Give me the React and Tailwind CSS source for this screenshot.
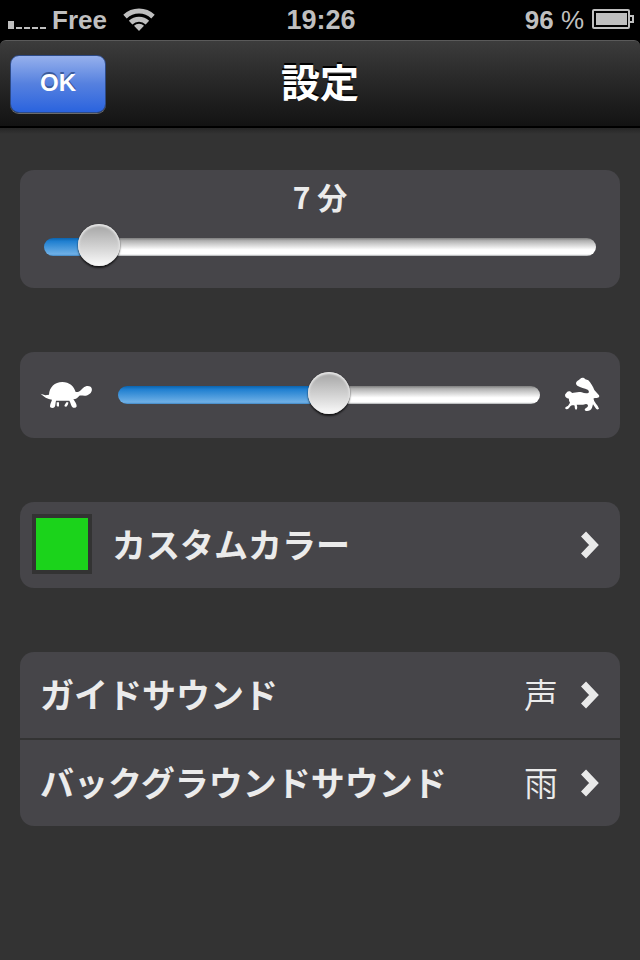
import { useState } from 'react';

function StatusBar() {
  return (
    <div className="grid h-10 grid-cols-3 items-center bg-black pl-2 pr-[6px] font-['Liberation_Sans',sans-serif] text-[26px] leading-10 font-bold text-[#bfbfbf]">
      <div className="flex items-center">
        <svg className="mr-1 shrink-0" width="40" height="40" viewBox="0 0 40 40" fill="currentColor">
          <rect x="0" y="21" width="6" height="8" />
          <rect x="8" y="27" width="6" height="2" />
          <rect x="16" y="27" width="6" height="2" />
          <rect x="24" y="27" width="6" height="2" />
          <rect x="32" y="27" width="6" height="2" />
        </svg>
        <span>Free</span>
        <svg className="ml-4 shrink-0" width="32" height="40" viewBox="0 0 32 40" fill="none" stroke="currentColor" strokeWidth="5">
          <path d="M2 16.6a20.3 20.3 0 0 1 28 0" />
          <path d="M7.6 22.6a12 12 0 0 1 16.8 0" />
          <path d="M16 31l-5-5.2a7 7 0 0 1 10 0z" fill="currentColor" stroke="none" />
        </svg>
      </div>
      <span className="text-center text-[27px]">19:26</span>
      <div className="flex items-center justify-end">
        <span>
          96 <span className="font-normal">%</span>
        </span>
        <svg className="ml-2 shrink-0" width="42" height="40" viewBox="0 0 42 40" fill="none" stroke="currentColor" strokeWidth="2">
          <rect x="1" y="10" width="36" height="18" rx="1" />
          <rect x="4" y="13" width="31" height="12" fill="currentColor" stroke="none" />
          <path d="M38 16h3v6h-3" />
        </svg>
      </div>
    </div>
  );
}

function NavBar() {
  return (
    <div className="bg-black">
      <header className="grid h-[88px] grid-cols-[1fr_auto_1fr] items-center rounded-t-md border-t border-b-2 border-t-[#5a5a5a] border-b-black bg-linear-to-b from-[#3c3c3c] to-[#131313] px-[10px]">
        <button
          type="button"
          className="h-[58px] w-24 rounded-[9px] border border-[#2d4a86] bg-linear-to-b from-[#96b0ec] via-[#5580df] to-[#2a63de] pb-0.5 font-['Liberation_Sans',sans-serif] text-2xl font-bold text-white shadow-[0_1px_0_#6b6b6b] text-shadow-[0_-2px_0_#3a5a9c]"
        >
          OK
        </button>
        <h1 className="pb-2 text-[39px] leading-[76px] font-bold text-white text-shadow-[0_-2px_0_#000]">設定</h1>
      </header>
    </div>
  );
}

function Slider({ label, value, min, max, onChange }) {
  const ratio = (value - min) / (max - min);
  // the fill ends under the middle of the 42px thumb
  const fill = `calc(21px + (100% - 42px) * ${ratio})`;

  return (
    <input
      type="range"
      aria-label={label}
      min={min}
      max={max}
      value={value}
      onChange={(e) => onChange(Number(e.target.value))}
      style={{ '--fill': fill }}
      className="block h-[18px] w-full min-w-0 cursor-pointer appearance-none rounded-full bg-[linear-gradient(#0b63ad,#1f7fd0_18%,#6fb0e6_90%,#3f86c4),linear-gradient(#7d7d7d,#b0b0b0_15%,#ffffff_65%,#ffffff_90%,#a5a8aa)] bg-[length:var(--fill)_100%,100%_100%] bg-no-repeat [&::-webkit-slider-runnable-track]:h-[18px] [&::-webkit-slider-thumb]:-mt-[14px] [&::-webkit-slider-thumb]:size-[42px] [&::-webkit-slider-thumb]:appearance-none [&::-webkit-slider-thumb]:rounded-full [&::-webkit-slider-thumb]:bg-linear-to-b [&::-webkit-slider-thumb]:from-[#a4a4a4] [&::-webkit-slider-thumb]:to-[#fbfbfb] [&::-webkit-slider-thumb]:shadow-[inset_0_1px_2px_1px_#e6e6e6,0_0_1px_#00000088,0_2px_2px_#000000aa]"
    />
  );
}

function Turtle() {
  return (
    <svg className="shrink-0" width="53" height="30" viewBox="60 120 159 90" fill="#fff">
      <path d="M62 161l14 5 11-2c1-22 17-38 40-38 21 0 35 13 40 30l7 0c7-2 10-8 16-13 8-7 22-7 25 2 3 10-5 20-17 22-8 1-13-1-20 0-4 6-10 10-18 11 4 6 10 14 10 20 0 6-9 8-14 2-4-6-4-12-8-18h-40c-2 8-1 14-4 19-4 5-14 4-14-2 0-7 4-13 6-20-13-2-26-9-34-18z" />
      <path d="M110 187l7 0 0 12c-4 2-8-1-7-4zM139 187h6c0 5-2 10-6 13-4 1-7-2-5-5z" />
    </svg>
  );
}

function Rabbit() {
  return (
    <svg className="shrink-0" width="35" height="36" viewBox="17 15 105 108" fill="#fff">
      <path d="M50 33C51 27 58 25 62 21C67 16 74 16 78 22L87 25C94 33 101 43 105 54L119 70C122 76 117 78 103 79C102 84 106 90 110 95C114 99 117 104 119 110C114 115 110 111 107 106L101 97C99 104 98 112 92 115C87 117 77 118 76 113C76 108 82 108 85 104C88 99 84 97 80 96C71 99 61 99 52 98C54 103 55 109 51 113C47 113 46 107 46 101C43 99 38 100 35 101C31 103 29 111 23 112C17 113 17 107 19 105C24 104 29 99 32 92C30 88 28 84 29 80C22 80 17 75 17 69C17 65 22 64 23 60C28 56 35 58 38 63C47 62 57 58 67 61C74 64 81 65 87 63C90 60 89 56 85 53C76 49 64 46 54 41C51 39 50 36 50 33Z" />
    </svg>
  );
}

function Chevron() {
  return (
    <svg className="shrink-0" width="18" height="28" viewBox="0 0 18 28" fill="none" stroke="#e9e9e9" strokeWidth="7">
      <path d="M2.5 3L13 14 2.5 25" />
    </svg>
  );
}

function Card({ children, className = '' }) {
  return <section className={`overflow-hidden rounded-[14px] bg-[#464549] ${className}`}>{children}</section>;
}

function Row({ label, value, swatch }) {
  return (
    <button
      type="button"
      className={`flex h-[86px] w-full items-center pr-[21px] text-left text-[34px] leading-[50px] text-[#ebebeb] ${swatch ? 'pl-3' : 'pl-5'}`}
    >
      <span className="flex flex-1 items-center pb-0.5">
        {swatch && <span className={`mr-5 size-[60px] shrink-0 border-4 border-[#333] ${swatch}`} />}
        <span className="flex-1 font-bold">{label}</span>
        {value && <span className="mr-[23px] font-[350]">{value}</span>}
      </span>
      <Chevron />
    </button>
  );
}

export default function App() {
  const [minutes, setMinutes] = useState(7);
  const [speed, setSpeed] = useState(50);

  return (
    <div lang="ja" className="min-h-screen bg-[#333] font-['Noto_Sans_CJK_JP',sans-serif]">
      <StatusBar />
      <NavBar />
      <main className="flex flex-col gap-16 bg-[linear-gradient(#262626,#333_6px)] px-5 pt-[42px] pb-16">
        <Card className="px-6 pt-1 pb-8">
          <p className="mb-5 text-center text-[30px] leading-[44px] font-bold text-[#ebebeb]">{minutes} 分</p>
          <Slider label="時間" min={1} max={91} value={minutes} onChange={setMinutes} />
        </Card>

        <Card className="flex h-[86px] items-center gap-[25px] px-5">
          <Turtle />
          <Slider label="速度" min={0} max={100} value={speed} onChange={setSpeed} />
          <Rabbit />
        </Card>

        <Card>
          <Row label="カスタムカラー" swatch="bg-[#1bd31b]" />
        </Card>

        <Card className="flex flex-col">
          <Row label="ガイドサウンド" value="声" />
          <div className="h-0.5 bg-[#333]" />
          <Row label="バックグラウンドサウンド" value="雨" />
        </Card>
      </main>
    </div>
  );
}
